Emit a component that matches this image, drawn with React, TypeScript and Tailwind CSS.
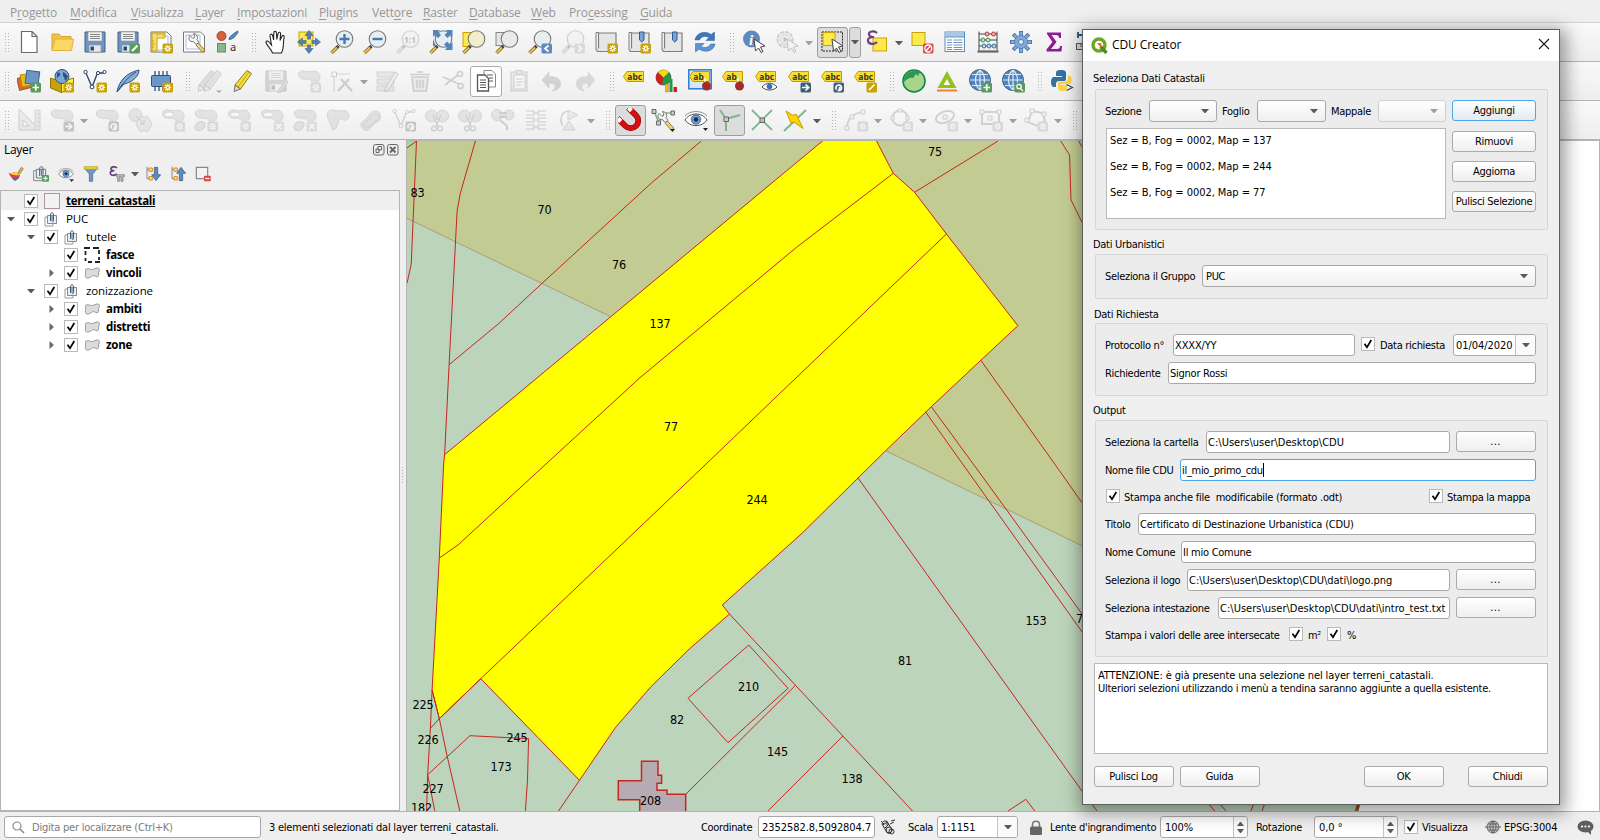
import React from "react";

type Node = React.ReactNode;

/* ---------- icon building blocks (24 x 24 grid) ---------- */

function Ico({ children, off = false, size = 24 }: { children: Node; off?: boolean; size?: number }) {
  return (
    <svg width={size} height={size} viewBox="0 0 24 24" fill="none" className={off ? "shrink-0 opacity-30 grayscale" : "shrink-0"}>
      {children}
    </svg>
  );
}

const Star = () => (
  <g>
    <rect x="13.5" y="13.5" width="10.5" height="10" rx="1.5" fill="#c9a206" />
    <path d="M18.75 15v7M15.3 18.5h6.9M16.3 16l4.9 5M21.2 16l-4.9 5" stroke="#fff" strokeWidth="1.1" />
    <circle cx="18.75" cy="18.5" r="1" fill="#c9a206" />
  </g>
);
const Badge = ({ c, d }: { c: string; d: string }) => (
  <g>
    <rect x="13.5" y="13.5" width="10.5" height="10" rx="1.5" fill={c} />
    <path d={d} stroke="#fff" strokeWidth="1.7" />
  </g>
);
const Plus = () => <Badge c="#5b9a5f" d="M18.75 15.3v6.4M15.5 18.5h6.5" />;
const ArrowB = () => <Badge c="#415f78" d="M15 18.5h6M18.5 15.5l3.2 3-3.2 3" />;
const RotB = () => <Badge c="#415f78" d="M16.5 20.5a2.8 2.8 0 1 1 3 1M19.5 18v3.5h-2" />;
const DelB = () => <Badge c="#d9a0a0" d="M16.3 16l5 5M21.3 16l-5 5" />;

const Blob = () => (
  <path d="M1.500 6C1 2.500 5 1.200 8 2.200s6 .3 9 0 6 2 6 6-3.500 6-6.500 5-3-3.200-6-3S2 10.500 1.500 6z" fill="#b4b9b4" stroke="#8a8a8a" strokeWidth="1" />
);
const Lens = ({ fill = "#e6eef2" }: { fill?: string }) => (
  <g>
    <path d="M1.500 23l7-7" stroke="#444" strokeWidth="3.200" />
    <path d="M1.500 23l5.500-5.500" stroke="#f4c430" strokeWidth="2.200" />
    <circle cx="14.500" cy="9" r="8.300" fill={fill} stroke="#777" strokeWidth="1.100" />
  </g>
);
const Tag = ({ t = "abc" }: { t?: string }) => (
  <g>
    <path d="M1.500 7.500L5 2.500h16.500v10H5z" fill="#f7de33" stroke="#bf9a07" />
    <text x="5.300" y="10.500" fontSize="8.500" fontWeight="700" fill="#3b3618" fontFamily="Noto Sans, sans-serif">{t}</text>
  </g>
);
const Floppy = () => (
  <g>
    <path d="M2 2h20v20H2z" fill="#6b97c8" stroke="#42617f" />
    <path d="M5 2h14v9H5z" fill="#f4f4f4" stroke="#8d8d8d" strokeWidth=".6" />
    <path d="M7 4.500h10M7 6.500h10M7 8.500h10" stroke="#777" strokeWidth=".9" />
    <path d="M6 15h12v7H6z" fill="#e8e8e8" stroke="#8d8d8d" strokeWidth=".6" />
    <path d="M7.500 16.500h3.500v4H7.500z" fill="#2d4a6e" />
  </g>
);
const Bookmark = () => (
  <g>
    <path d="M4.500 3h17.500v18.500H3.500a2 2 0 0 1 0-3.500h1z" fill="#e6e6e6" stroke="#7d7d7d" strokeWidth="1.200" />
    <path d="M2 20V2.500h2.500v15.500" stroke="#7d7d7d" fill="#eee" />
  </g>
);
const Ribbon = () => <path d="M12.500 2h4.500v8l-2.250 2-2.250-2z" fill="#7ba3d0" stroke="#2f5b93" />;
const Globe = () => (
  <g>
    <circle cx="12" cy="11" r="10.500" fill="#4d86c6" stroke="#4f5d70" />
    <path d="M2 11h20M12 1v20M4 5.500h16M4 16.500h16M12 1c-6 5-6 15 0 20M12 1c6 5 6 15 0 20" stroke="#dfe9f3" strokeWidth="1.200" />
  </g>
);
const CursorArrow = () => <path d="M12 9l11 7-4.500 1 2.500 4.500-2 1-2.500-4.500-3 3z" fill="#fff" stroke="#444" />;
const Pencil = ({ c = "#f5dd3c" }: { c?: string }) => (
  <g>
    <path d="M4 16L16 1.500l4.500 3L9.500 20z" fill={c} stroke="#8a7a20" />
    <path d="M4 16l-.8 6.500L9.500 20z" fill="#e9d6b0" stroke="#555" strokeWidth=".8" />
    <path d="M7 18L18 3" stroke="#b09a1c" strokeWidth=".8" />
  </g>
);
const Scissors = ({ y = 0 }: { y?: number }) => (
  <g transform={`translate(0 ${y})`}>
    <path d="M8 5l5 11M16 5l-5 11" stroke="#777" strokeWidth="1.300" />
    <circle cx="9" cy="18.500" r="2.300" stroke="#777" strokeWidth="1.300" />
    <circle cx="15" cy="18.500" r="2.300" stroke="#777" strokeWidth="1.300" />
  </g>
);
const Eye = () => (
  <g>
    <path d="M1 12c5-8 17-8 22 0-5 7.500-17 7.500-22 0z" fill="#fff" stroke="#555" />
    <path d="M1 8C6 2 18 2 23 8" stroke="#888" strokeWidth=".9" />
    <circle cx="12" cy="11.500" r="4.800" fill="#6d9bd0" stroke="#395d8a" strokeWidth=".8" />
    <circle cx="12" cy="11.500" r="2.200" fill="#1f2e40" />
  </g>
);
const Vert = ({ c = "#2f4562" }: { c?: string }) => (
  <g>
    <path d="M2.500 3l6.500 15 5.500-14h7" stroke={c} strokeWidth="1.300" />
    <g fill="#fff" stroke={c}>
      <circle cx="2.500" cy="3" r="1.700" />
      <circle cx="9" cy="18" r="1.900" />
      <circle cx="15" cy="4" r="1.600" />
      <circle cx="21.500" cy="3" r="1.600" />
    </g>
  </g>
);
const Wrench = () => (
  <g>
    <path d="M15 14l7 7.500" stroke="#8d7a35" strokeWidth="4" />
    <path d="M15 14l6.500 7" stroke="#ecd583" strokeWidth="2.500" />
    <path d="M8 5.500l3 3 2-1.500-1.500-3.500c4 .5 5 4 3.500 6l2 3-3 2-2.500-3c-4 1-6-3-3.500-6z" fill="#f4f4f4" stroke="#666" strokeWidth=".9" />
  </g>
);

const icons: Record<string, Node> = {
  newdoc: <path d="M4.500 1.500h10.500l5 5v16H4.500zM15 1.500v5h5" fill="#fff" stroke="#6b6b6b" strokeWidth="1.200" />,
  open: (
    <g>
      <path d="M2 20V4h7l2 2.500h10v3" fill="#f1c244" stroke="#d9a52c" />
      <path d="M2 20.500L5 9h18.500l-2 11.500z" fill="#fbd765" stroke="#e2b13a" />
    </g>
  ),
  save: <Floppy />,
  saveas: <g><Floppy /><rect x="13.500" y="13.500" width="10.500" height="10" rx="1.500" fill="#5b9a5f" /><path d="M16 21l5.500-5.500" stroke="#fff" strokeWidth="2" /></g>,
  layout: (
    <g>
      <path d="M2 2h16l4 4v16H2z" fill="#fff" stroke="#777" />
      <path d="M6 6h13v14H6z" stroke="#a9b9e8" />
      <path d="M3 3h13v5H8v13H3z" fill="#f4dd73" stroke="#c9a206" />
      <path d="M8 3v3M11 3v2M14 3v3M3 11h2M3 14h3M3 17h2" stroke="#c9a206" />
      <Star />
    </g>
  ),
  layoutmgr: <g><path d="M1.500 2h17l4 4v16h-21z" fill="#fff" stroke="#777" /><path d="M4 5h14v14H4z" stroke="#a9b9e8" /><Wrench /></g>,
  style: (
    <g>
      <circle cx="6.500" cy="6" r="4.500" fill="#d4623a" stroke="#a84826" />
      <path d="M14 9.500C14 6 20 3 22.500 1l.5 1c-1.500 3-4 7-9 7.500z" fill="#5d8bbd" stroke="#3a6391" />
      <rect x="2.500" y="13.500" width="8" height="8.500" fill="#8ab68c" stroke="#5f9062" />
      <text x="15" y="21" fontSize="11" fill="#333" fontFamily="Noto Sans, sans-serif">a</text>
    </g>
  ),
  hand: (
    <path d="M8.500 23c-1-4-5.500-7-6.500-10.500-.3-1.800 1.800-2 3-.5L7.500 15 6 6c-.3-2.200 2-2.500 2.600-.5l1 4.500L9.800 3c0-2.200 2.600-2.200 2.700 0l.3 6.500 1.300-6c.5-2 2.700-1.500 2.500.5l-.6 6.500 1.800-4c.8-1.800 2.700-1 2.300.8C18.800 13 20.500 17 17.500 23z"
      fill="#fff" stroke="#222" strokeWidth="1.100" />
  ),
  pansel: (
    <g>
      <rect x="2" y="2" width="14" height="14" fill="#fce94f" stroke="#c9a206" />
      <path d="M12 .5l4 5h-2.500v5h5V8l5 4-5 4v-2.500h-5v5H16l-4 5-4-5h2.500v-5h-5V16l-5-4 5-4v2.500h5v-5H8z" fill="#4f80b8" stroke="#34507a" strokeWidth=".5" />
      <rect x="9.500" y="9.500" width="5" height="5" fill="#fce94f" />
    </g>
  ),
  zoomin: <g><Lens /><path d="M14.500 4v10M9.500 9h10" stroke="#4478b5" strokeWidth="2.400" /></g>,
  zoomout: <g><Lens /><path d="M9.500 9h10" stroke="#4478b5" strokeWidth="2.400" /></g>,
  zoom11: <g><Lens /><text x="8" y="12.500" fontSize="8.500" fontWeight="700" fill="#333" fontFamily="Noto Sans, sans-serif">1:1</text></g>,
  zoomfull: (
    <g>
      <Lens />
      <path d="M4 0h7L9 2l3 3-3 3-3-3-2 2zM17 0h6.500v7l-2-2-3 3-3-3 3-3zM23.500 12v8H16l2-2.500-3-3 3-3 3 3zM4 9v7h3z" fill="#5284bd" />
    </g>
  ),
  zoomsel: <g><rect x="1" y="2.500" width="11" height="14" fill="#fce94f" stroke="#c9a206" /><Lens fill="#f2eecb" /></g>,
  zoomlayer: <g><rect x="1" y="2.500" width="11" height="13" fill="#e5e5e5" stroke="#888" /><Lens fill="#e9eae9" /></g>,
  zoomlast: <g><Lens /><Badge c="#5d8bbd" d="M20.500 15.500l-3.500 3 3.500 3" /></g>,
  zoomnext: <g><Lens /><Badge c="#8aa" d="M17 15.500l3.500 3-3.500 3" /></g>,
  mapnew: <g><Bookmark /><Star /></g>,
  bmnew: <g><Bookmark /><Ribbon /><Star /></g>,
  bmshow: <g><Bookmark /><Ribbon /></g>,
  refresh: (
    <g fill="#3f77bb" stroke="#2b5c99" strokeWidth=".5">
      <path d="M2 10C3 3 12 0 18 4.500L21.500 2v8.500H13l3-3c-4-2-8-1-9.500 2.500z" />
      <path d="M22 14c-1 7-10 9.500-16 5L2.500 22v-8.500H11l-3 3c4 2 8 1 9.500-2.500z" fill="#5c93d3" />
    </g>
  ),
  info: (
    <g>
      <circle cx="9.500" cy="9" r="8.500" fill="#5d8bbd" />
      <text x="7" y="14.500" fontSize="15" fontStyle="italic" fontWeight="700" fill="#fff" fontFamily="Liberation Serif, serif">i</text>
      <CursorArrow />
    </g>
  ),
  action: (
    <g>
      <circle cx="10" cy="9.500" r="7.500" stroke="#777" strokeWidth="2" strokeDasharray="4 1" />
      <circle cx="10" cy="9.500" r="5" fill="#ddd" stroke="#777" />
      <path d="M8.500 6.500l4.500 3-4.500 3z" fill="#555" />
      <CursorArrow />
    </g>
  ),
  select: (
    <g>
      <rect x="2" y="2" width="20.500" height="19" stroke="#222" strokeDasharray="2 1" />
      <rect x="3" y="2.500" width="12" height="13" fill="#fce94f" stroke="#c9a206" />
      <CursorArrow />
    </g>
  ),
  epsel: (
    <g>
      <rect x="8" y="8" width="13.500" height="13" fill="#fce94f" stroke="#c9a206" />
      <path d="M12 3C9 0 3.500 1.500 4 4.500 4.200 7 7 7 9 7 6 7 3 7.500 3 10.500c0 4 6 4.500 9 1.500" stroke="#6b3f7d" strokeWidth="2.200" />
    </g>
  ),
  desel: (
    <g>
      <rect x="2" y="2.500" width="13" height="13" fill="#fce94f" stroke="#c9a206" />
      <rect x="13" y="13.500" width="10.500" height="10" rx="1.500" fill="#da4d4d" />
      <circle cx="18.250" cy="18.500" r="3.500" stroke="#fff" strokeWidth="1.300" />
      <path d="M16 21l4.500-5" stroke="#fff" strokeWidth="1.300" />
    </g>
  ),
  table: (
    <g>
      <rect x="2" y="2" width="19.500" height="19.500" fill="#fff" stroke="#5d8bbd" />
      <path d="M2.500 2.500h18.500v4.500H2.500z" fill="#a9c8e4" />
      <path d="M4 10h5M10.500 10h9M4 12.500h5M10.500 12.500h9M4 15h5M10.500 15h9M4 17.500h5M10.500 17.500h9M4 19.500h5M10.500 19.500h9M2 7h19" stroke="#6a93c0" />
    </g>
  ),
  abacus: (
    <g>
      <path d="M3 1.500v19M21 1.500v19M3 4h18M3 10h18M3 16h18" stroke="#444" />
      <path d="M1.500 21.500h21" stroke="#666" strokeWidth="2.200" />
      <g strokeWidth="1">
        <g fill="#f0b0b0" stroke="#b33"><circle cx="11" cy="4" r="2" /><circle cx="17.500" cy="4" r="2" /></g>
        <g fill="#c5e6c5" stroke="#3a8f3f"><circle cx="7" cy="10" r="2" /><circle cx="12" cy="10" r="2" /></g>
        <g fill="#b9d2ee" stroke="#3d6ea5"><circle cx="8" cy="16" r="2" /><circle cx="13" cy="16" r="2" /><circle cx="18" cy="16" r="2" /></g>
      </g>
    </g>
  ),
  gear: (
    <g>
      <path d="M12 1v22M1 12h22M4.200 4.200l15.600 15.600M19.800 4.200L4.200 19.800" stroke="#4a7ab5" strokeWidth="4" />
      <path d="M12 2v20M2 12h20M5 5l14 14M19 5L5 19" stroke="#84a9d6" strokeWidth="2.400" />
      <circle cx="12" cy="12" r="6.500" fill="#84a9d6" stroke="#4a7ab5" strokeWidth=".8" />
      <circle cx="12" cy="12" r="2.500" fill="#f3f3f3" stroke="#4a7ab5" />
    </g>
  ),
  sigma: <path d="M5 2.500h14V8h-2c0-2-1-3-3-3H9.500l5 7-5.500 7h6c2 0 3-1 3-3h2l-.5 5.500H4.500v-2l6-7.500L5 4z" fill="#8e1a94" />,
  measure: <g><path d="M3 2v6M3 5h19" stroke="#34507a" strokeWidth="1.800" /><path d="M1.500 13.500h24v6h-24zM6 13v4M10 13v4" fill="#ddd" stroke="#555" /></g>,
  dsm: (
    <g>
      <rect x="1" y="8" width="12" height="12" fill="#d96a2f" stroke="#a94b1a" transform="rotate(-14 7 14)" />
      <rect x="4" y="5" width="12" height="12" fill="#e8b91b" stroke="#b38a06" transform="rotate(-8 10 11)" />
      <rect x="9" y="2" width="13" height="13" fill="#6b97c8" stroke="#42617f" transform="rotate(8 15 8)" />
      <Plus />
    </g>
  ),
  gpkg: (
    <g>
      <path d="M.5 9l11 4v10.500L.5 19z" fill="#c9a206" stroke="#8f7305" />
      <path d="M11.500 13l12-4v10l-12 4.500z" fill="#fff04f" stroke="#8f7305" />
      <circle cx="12" cy="7.500" r="7" fill="#7da7d4" stroke="#34507a" />
      <path d="M7 4c2-1 4 0 3 2s-3 2-3 4M13 3c3 1 3 3 5 4l-2 5c-2-1-1-4-3-5z" fill="#34507a" />
      <Star />
    </g>
  ),
  shp: <g><Vert /><Star /></g>,
  spatialite: (
    <g>
      <path d="M1 23C3 12 10 4 23 1c0 6-6 12-15 14z" fill="#85aedb" stroke="#34507a" />
      <path d="M1 23C6 15 12 8 20 3" stroke="#34507a" />
      <Star />
    </g>
  ),
  memory: (
    <g>
      <path d="M6 2v20M10 2v20M14 2v20M18 2v20" stroke="#34507a" strokeWidth="1.300" />
      <rect x="2.500" y="6.500" width="19" height="11" rx="1" fill="#6b97c8" stroke="#34507a" />
      <Star />
    </g>
  ),
  pencils: <g><g transform="translate(-3 0)"><Pencil c="#b9a9a9" /></g><g transform="translate(3 0)"><Pencil c="#c9b9b9" /></g><path d="M18 21.500h6l-3 2.500z" fill="#000" /></g>,
  pencil: <Pencil />,
  saveedit: <g><Floppy /><path d="M14 22l8-11 2 2-7 10-3 1z" fill="#d9a0a0" stroke="#777" /></g>,
  addpoly: <g><Blob /><Star /></g>,
  vertex: <g><path d="M4 7v16M6 5h14" stroke="#777" /><rect x="2" y="3" width="4.500" height="4.500" fill="#fff" stroke="#777" /><path d="M8 22L19 10M11 10l11 12" stroke="#777" strokeWidth="2.400" /></g>,
  multiedit: <g><path d="M2 3h17v5H2zM2 10h17v5H2zM2 17h17v5H2z" fill="#cccba5" stroke="#888" /><path d="M10 20L20 3l3 2-9.500 16-3.500 2z" fill="#ddd" stroke="#666" /></g>,
  trash: <g><path d="M4 8h16l-1.500 14h-13z" fill="#e6cfcf" stroke="#9a6a6a" strokeWidth="1.500" /><path d="M2 5.500h20M9 3h6M9 11v8M12 11v8M15 11v8" stroke="#9a6a6a" strokeWidth="1.600" /></g>,
  cut: <g><path d="M2 8l16 7M4 16L17 6" stroke="#777" strokeWidth="1.600" /><circle cx="19" cy="5" r="2.500" stroke="#777" strokeWidth="1.500" /><circle cx="19.500" cy="17" r="2.500" stroke="#777" strokeWidth="1.500" /></g>,
  copy: (
    <g stroke="#555" fill="#fff">
      <path d="M10 1.500h8l3.500 3.500v13H10z" stroke="#888" />
      <path d="M3.500 6h7.500l3.500 3.500v12.500h-11z" strokeWidth="1.300" />
      <path d="M6 11h6M6 13.500h6M6 16h6M6 18.500h6M13 6h6M15 9h4M15 12h4" />
    </g>
  ),
  paste: <g><rect x="4" y="3" width="16" height="19" fill="#d3d1b4" stroke="#777" /><rect x="7" y="6" width="11" height="14" fill="#fff" stroke="#777" /><path d="M9 1.500h6V5H9zM9 10h7M9 13h7M9 16h5" fill="#ccc" stroke="#777" /></g>,
  undo: <path d="M9 3v5c7-1 12 2 11.500 7.500-.5 4-4 6-8 6.500 4-3 4-8-3.500-8v5L2 11z" fill="#a98070" stroke="#9a6a6a" strokeWidth=".7" />,
  redo: <path d="M15 3v5C8 7 3 10 3.500 15.500c.5 4 4 6 8 6.500-4-3-4-8 3.500-8v5l7-8z" fill="#8fa08f" stroke="#7a8a7a" strokeWidth=".7" />,
  abc: <Tag />,
  diagram: (
    <g>
      <circle cx="8.500" cy="8.500" r="7.500" fill="#1d9c45" stroke="#333" strokeWidth=".6" />
      <path d="M8.500 8.500L3 3.500a7.500 7.500 0 0 1 11-.5z" fill="#f8d515" />
      <path d="M8.500 8.500L3 3.500a7.500 7.500 0 0 0 4 12.500z" fill="#d11f1f" />
      <path d="M10.500 15h3v8h-3z" fill="#f8b515" stroke="#a77" strokeWidth=".5" />
      <path d="M14.500 10h3v13h-3z" fill="#1d9c45" />
      <path d="M18.500 18h3.500v5h-3.500z" fill="#d11f1f" />
    </g>
  ),
  abpin: (
    <g>
      <rect x=".8" y=".8" width="22.400" height="19" fill="#d9e8f8" stroke="#1e74d2" strokeWidth="1.400" />
      <Tag t="ab" /><path d="M17 9v8" stroke="#eee" strokeWidth="2" /><circle cx="18.500" cy="17" r="4.500" fill="#a52a2a" />
    </g>
  ),
  abpin2: <g><Tag t="ab" /><path d="M17 9v8" stroke="#eee" strokeWidth="2" /><circle cx="18.500" cy="17" r="4.500" fill="#a52a2a" /></g>,
  abceye: <g><Tag /><path d="M8 18c4-5 11-5 15 0-4 4-11 4-15 0z" fill="#fff" stroke="#444" /><circle cx="15.500" cy="17.500" r="2.800" fill="#3f6ea8" /></g>,
  abcmove: <g><Tag /><ArrowB /></g>,
  abcrot: <g><Tag /><RotB /></g>,
  abcedit: <g><Tag /><Badge c="#c9a206" d="M16 21l5.500-5.500" /></g>,
  ball: <g><circle cx="12" cy="12" r="11" fill="#a9d48d" stroke="#12874a" strokeWidth="1.600" /><path d="M2 10C4 3 12 0 18 3l-2 4-2-2-3 4c-3-1-6 1-9 4z" fill="#2b9a50" /></g>,
  tri: <g><path d="M12 2L2.500 19h19z" fill="#97bf1f" /><path d="M12 10l-3.500 6h6.500z" fill="#fff" /><path d="M2 21.500h20" stroke="#f0832a" strokeWidth="2" /></g>,
  globeadd: <g><Globe /><Plus /></g>,
  globefind: <g><Globe /><rect x="13.500" y="13.500" width="10.500" height="10" rx="1.500" fill="#5b9a5f" /><circle cx="18" cy="17.500" r="2.200" stroke="#fff" strokeWidth="1.300" /><path d="M19.500 19.500l2.500 2.500" stroke="#fff" strokeWidth="1.300" /></g>,
  python: (
    <g>
      <path d="M11 1c-4 0-5 1-5 3v3h6v1H4c-2 0-3 2-3 5s1 5 3 5h2v-3c0-2 1-3 3-3h5c2 0 2-1 2-3V4c0-2-1-3-5-3z" fill="#3470a2" />
      <path d="M12 22c4 0 5-1 5-3v-3h-6v-1h8c2 0 3-2 2.500-5S20 6 18 6.500v3c0 2-1 3-3 3h-5c-2 0-2 1-2 3V19c0 2 1 3 4 3z" fill="#fdd144" />
      <path d="M16.500 15.500l6 3-6 3" stroke="#444" strokeWidth="1.200" />
    </g>
  ),
  cad: <g><path d="M2 1v21h21z" fill="#e0cfcb" stroke="#777" /><path d="M6 12v6h6z" fill="#fff" stroke="#777" /><path d="M18 2h5v20h-5zM20 6h3M20 10h3M20 14h3M20 18h3" fill="#cccba5" stroke="#888" /></g>,
  bmove: <g><Blob /><ArrowB /></g>,
  brot: <g><Blob /><RotB /></g>,
  bsimp: <g><circle cx="7.500" cy="7" r="6.500" fill="#bbb" stroke="#888" /><path d="M12 9h8l4 7-4 7h-8l-4-7z" fill="#ccc" stroke="#888" /><path d="M8 8l8 8M16 12v4h-4" stroke="#666" /></g>,
  bring: <g><Blob /><ellipse cx="8" cy="6.500" rx="4.500" ry="2.500" fill="#fff" stroke="#888" /><Star /></g>,
  bpart: <g><Blob /><ellipse cx="6" cy="18" rx="5.500" ry="4" fill="#bbb" stroke="#888" transform="rotate(-35 6 18)" /><Star /></g>,
  bdel: <g><Blob /><ellipse cx="8" cy="6.500" rx="4.500" ry="2.500" fill="#fff" stroke="#888" /><DelB /></g>,
  bpdel: <g><Blob /><ellipse cx="6" cy="18" rx="5.500" ry="4" fill="#bbb" stroke="#888" transform="rotate(-35 6 18)" /><DelB /></g>,
  reshape: <path d="M1.500 5.500C2 2 6 1.500 9 2.500s6 0 9 0 5 2.500 5 5.500-3 5-5.500 4-3.500-1.500-4.500 0-1.500 9-5 9.500-2.500-4-4-6.500S1 9 1.500 5.500z" fill="#b4b9b4" stroke="#8a8a8a" />,
  offset: <g><path d="M4 21c-5-5 0-8 3-10s4-9 10-8 6 9 1 11-8 12-14 7z" fill="#b4b9b4" stroke="#8a8a8a" /><path d="M6 19c-3-3 0-5 3-7s4-7 8-6 4 5 0 7-7 9-11 6z" stroke="#777" /></g>,
  revert: <g><Vert c="#777" /><RotB /></g>,
  split: <g><circle cx="6.500" cy="8" r="6" fill="#bbb" stroke="#888" /><circle cx="17.500" cy="8" r="6" fill="#bbb" stroke="#888" /><Scissors y={2} /></g>,
  merge: <g><circle cx="6" cy="7" r="5.500" fill="#bbb" stroke="#888" /><circle cx="18" cy="7" r="5" fill="#bbb" stroke="#888" /><path d="M8 5h8M8 9h8M9 12l7 6v4" stroke="#777" strokeWidth="2" /></g>,
  mergeattr: <g stroke="#777" strokeWidth="1.200"><path d="M2 3h8v4H2M22 3h-8v4h8M2 10h8v4H2M22 10h-8v4h8M2 17h8v4H2M22 17h-8v4h8M9 5h6M9 12h6M9 19h6" /></g>,
  rotsym: <g><path d="M12 3c-8 0-10 10-6 15" stroke="#777" strokeWidth="1.400" /><path d="M11 2l10 5-10 5zM12 13l6 9H6z" fill="#ccc" stroke="#888" /></g>,
  magnet: (
    <g transform="rotate(-45 12 12)">
      <path d="M4.500 2v11a7.500 7.500 0 0 0 15 0V2" stroke="#7c0c0c" strokeWidth="5.800" />
      <path d="M4.500 2.500V13a7.500 7.500 0 0 0 15 0V2.500" stroke="#d80d0d" strokeWidth="4.600" />
      <path d="M4.500 2.500v4M19.500 2.500v4" stroke="#fff" strokeWidth="4.400" />
    </g>
  ),
  snapcfg: <g><path d="M3 3l5 12L14 5h8" stroke="#7db987" strokeWidth="1.600" /><g fill="#ccc" stroke="#666"><path d="M1 1.500h4v4H1zM5.500 13h4v4h-4zM20 3h3.500v4H20z" /></g><Wrench /><path d="M19 21h5l-2.500 3z" fill="#222" /></g>,
  eye: <g><Eye /><path d="M19 20h5l-2.500 3z" fill="#222" /></g>,
  topo: <g><path d="M9 11L3 2M9 11l14-4M9 11v12" stroke="#7db987" strokeWidth="2" /><path d="M7 9h4.500v4.500H7z" fill="#ccc" stroke="#666" /></g>,
  isect: <g><path d="M2 2l20 20M22 2L2 22" stroke="#7db987" strokeWidth="1.800" /><path d="M10 10h4.500v4.500H10z" fill="#bbb" stroke="#666" /></g>,
  trace: <g><path d="M1 23L23 2" stroke="#7db987" strokeWidth="2" /><path d="M3 3l7 4.500 3-1.500 3 6 4 8.500-9-6.500-3 1z" fill="#ffd500" stroke="#c99b00" /></g>,
  curve: <g><path d="M3 20C3 11 8 6 18 4" stroke="#777" strokeWidth="1.500" /><g fill="#eee" stroke="#777"><path d="M1 18h4v4H1zM6 7h4v4H6zM17 2h4v4h-4z" /></g><Star /></g>,
  circle: <g><circle cx="11" cy="10" r="7.500" stroke="#777" strokeWidth="1.800" /><g fill="#eee" stroke="#777"><path d="M9 1h4v3H9zM2 8h3v4H2zM17 8h3v4h-3z" /></g><Star /></g>,
  ellipse: <g><ellipse cx="11" cy="9" rx="9.500" ry="5.500" stroke="#777" strokeWidth="1.800" transform="rotate(-20 11 9)" /><path d="M9 7h4v4H9z" fill="#eee" stroke="#777" /><Star /></g>,
  rect: <g><rect x="3" y="4" width="17" height="12" stroke="#777" strokeWidth="1.800" /><g fill="#eee" stroke="#777"><path d="M1 2h4v4H1zM18 2h4v4h-4zM9 8h4v4H9z" /></g><Star /></g>,
  poly: <g><path d="M8 3l11 2 2 8-7 5-10-4z" stroke="#777" strokeWidth="1.800" /><g fill="#eee" stroke="#777"><path d="M6 1h4v4H6zM18 4h4v4h-4zM1 10h4v4H1z" /></g><Star /></g>,
};

/* ---------- toolbars ---------- */

/* "|" handle, "v" menu arrow, "-x" disabled, "+x" checked, "*x" hovered frame */
const rows: string[][] = [
  "newdoc open save saveas layout layoutmgr style | hand pansel zoomin zoomout -zoom11 zoomfull zoomsel zoomlayer zoomlast -zoomnext mapnew bmnew bmshow refresh | info -action -v +select V epsel v desel table abacus gear sigma measure".split(" "),
  "dsm gpkg shp spatialite memory | -pencils pencil -saveedit -addpoly -vertex -v -multiedit -trash -cut *copy -paste -undo -redo | abc diagram abpin abpin2 abceye abcmove abcrot abcedit | ball tri globeadd globefind | python".split(" "),
  "-cad -bmove -v -brot -bsimp -bring -bpart -bring -bdel -bpdel -reshape -offset -revert -split -split -merge -mergeattr -rotsym -v | +magnet snapcfg eye +topo isect trace v | -curve -v -circle -v -ellipse -v -rect -v -poly -v |".split(" "),
];

const Caret = ({ off = false, w = 8 }: { off?: boolean; w?: number }) => (
  <svg width={w} height="4" viewBox="0 0 8 4" className="shrink-0">
    <path d="M0 0h8L4.500 4h-1z" fill={off ? "#a0a0a0" : "#5a5a5a"} />
  </svg>
);

function Handle({ className }: { className: string }) {
  return (
    <div className={`flex h-full shrink-0 items-center ${className}`}>
      <svg width="5" height="19" className="shrink-0">
        {Array.from({ length: 7 }, (_, i) => (
          <g key={i} fill="#b5b5b5">
            <rect x="0" y={i * 3} width="1" height="1" />
            <rect x="3" y={i * 3} width="1" height="1" />
          </g>
        ))}
      </svg>
    </div>
  );
}

function Toolbar({ items }: { items: string[] }) {
  return (
    <div className="flex h-[39px] shrink-0 items-center border-b border-[#b4b4b4] bg-linear-to-b from-[#f9f9f9] to-[#eeeeee]">
      <Handle className="w-[12.5px] pl-[5px]" />
      {items.map((raw, i) => {
        if (raw === "|") return <Handle key={i} className="w-[16px] pl-[8.500px]" />;
        if (raw === "v" || raw === "-v")
          return (
            <div key={i} className="flex h-full w-[12px] shrink-0 items-center justify-center pr-px pt-px">
              <Caret off={raw === "-v"} />
            </div>
          );
        if (raw === "V")
          return (
            <div key={i} className="flex h-[31px] w-[12px] shrink-0 items-center justify-center rounded-[3px] border border-[#9d9d9d] bg-[#dcdcdc]">
              <Caret />
            </div>
          );
        const mod = raw[0];
        const name = "-+*".includes(mod) ? raw.slice(1) : raw;
        const frame =
          mod === "+"
            ? "flex h-[31px] w-[31px] items-center justify-center rounded-[3px] border border-[#9d9d9d] bg-[#dcdcdc]"
            : mod === "*"
            ? "flex h-[31px] w-[32px] items-center justify-center rounded-[3px] border border-[#ababab] bg-white"
            : "flex h-[31px] w-[33px] items-center justify-center";
        return (
          <div key={i} className="flex w-[33px] shrink-0 justify-center">
            <div className={frame}>
              <Ico off={mod === "-"}>{icons[name]}</Ico>
            </div>
          </div>
        );
      })}
    </div>
  );
}

function MenuBar() {
  const menus: [string, number, string][] = [
    ["Progetto", 1, "w-[60px]"], ["Modifica", 0, "w-[61px]"], ["Visualizza", 0, "w-[64px]"], ["Layer", 0, "w-[42px]"],
    ["Impostazioni", 0, "w-[82px]"], ["Plugins", 0, "w-[53px]"], ["Vettore", 4, "w-[51px]"], ["Raster", 0, "w-[46px]"],
    ["Database", 0, "w-[62px]"], ["Web", 0, "w-[38px]"], ["Processing", 3, "w-[71px]"], ["Guida", 0, "w-[40px]"],
  ];
  return (
    <div className="flex h-[20px] shrink-0 items-center border-b border-[#d2d2d2] bg-[#efefef] pl-[10px] pt-px font-['Open_Sans',sans-serif] text-[12px] tracking-[-0.15px] text-[#979797]">
      {menus.map(([m, u, w]) => (
        <div key={m} className={`shrink-0 whitespace-pre leading-none ${w}`}>
          {m.slice(0, u)}
          <span className="underline underline-offset-2">{m[u]}</span>
          {m.slice(u + 1)}
        </div>
      ))}
    </div>
  );
}

/* ---------- layers panel ---------- */

function Check({ className = "" }: { className?: string }) {
  return (
    <div className={`flex h-[14px] w-[14px] shrink-0 items-center justify-center border border-[#b9b9b9] bg-white ${className}`}>
      <svg width="10" height="10" viewBox="0 0 10 10" fill="none">
        <path d="M1.500 4.800l2.500 3.400L8.300 1" stroke="#000" strokeWidth="1.700" />
      </svg>
    </div>
  );
}

const GroupIcon = () => (
  <svg width="14" height="15" viewBox="0 0 14 15" fill="none">
    <path d="M3 5H1v9h8v-2" stroke="#999" />
    <path d="M3.500 3.500h9v8h-9z" fill="#e9eef3" stroke="#888" />
    <path d="M6.500 9V3c0-3 3-3 3 0v5.500c0 1.500-1.500 1.500-1.500 0V4" stroke="#42617f" />
  </svg>
);
const PolyIcon = () => (
  <svg width="16" height="13" viewBox="0 0 16 13" fill="none">
    <path d="M1.500 2.500c2-2 5 .5 7 0s5-2.500 6.500-1-.8 3.500-.5 5.500-.5 3.500-2.500 2.500-2.500-1.500-4.500 0-5.500 2.500-6 0 .500-4 0-7z" fill="#dcdcdc" stroke="#999" />
  </svg>
);

const tree: { pad: string; open: string; icon: string; text: string; bold: boolean }[] = [
  { pad: "pl-[4px]", open: "", icon: "square", text: "terreni_catastali", bold: true },
  { pad: "pl-[4px]", open: "down", icon: "group", text: "PUC", bold: false },
  { pad: "pl-[24px]", open: "down", icon: "group", text: "tutele", bold: false },
  { pad: "pl-[44px]", open: "", icon: "dash", text: "fasce", bold: true },
  { pad: "pl-[44px]", open: "right", icon: "poly", text: "vincoli", bold: true },
  { pad: "pl-[24px]", open: "down", icon: "group", text: "zonizzazione", bold: false },
  { pad: "pl-[44px]", open: "right", icon: "poly", text: "ambiti", bold: true },
  { pad: "pl-[44px]", open: "right", icon: "poly", text: "distretti", bold: true },
  { pad: "pl-[44px]", open: "right", icon: "poly", text: "zone", bold: true },
];

function LayerPanel() {
  return (
    <div className="flex w-[400px] shrink-0 flex-col font-['Open_Sans',sans-serif] text-[12px] text-black">
      <div className="flex h-[20px] items-center pl-[4px] pr-px">
        <span className="flex-1 leading-none tracking-[-0.3px]">Layer</span>
        <svg width="26" height="12" viewBox="0 0 26 12" fill="none" stroke="#666">
          <rect x=".5" y=".5" width="10.500" height="10.500" rx="2" />
          <path d="M5 2.500h3.500V6H5zM3 5h3v3.500H3z" />
          <rect x="14.500" y=".5" width="10.500" height="10.500" rx="2" />
          <path d="M17 3l5.500 5.500M22.500 3L17 8.500" strokeWidth="1.800" />
        </svg>
      </div>
      <div className="flex h-[30px] items-center pb-[2px] pl-[8px]">
        <div className="flex w-[25px]"><Ico size={16}><path d="M14 11l6-9 3 2-6 9z" fill="#e0ac5a" stroke="#9a6b22" /><path d="M1 10c5 2 8-2 12 0l5 4c-1 4-4 7-8 8-3-3-7-6-9-12z" fill="#e5412f" /><path d="M1 10c5 2 8-2 12 0l5 4c-6 0-12 0-17-4z" fill="#ffd23c" /><path d="M6 18c4 0 7-1 11-2-1 3-4 5-7 6z" fill="#3f6ec0" /></Ico></div>
        <div className="flex w-[25px]"><Ico size={16}><path d="M5 7H1v15h13v-3" stroke="#888" strokeWidth="1.500" /><path d="M5 5h14v13H5z" fill="#e9eef3" stroke="#777" strokeWidth="1.500" /><path d="M10 15V4c0-4 5-4 5 0v9c0 3-2.500 3-2.500 0V6" stroke="#42617f" strokeWidth="1.500" /><Plus /></Ico></div>
        <div className="flex w-[25px]"><Ico size={16}><Eye /><path d="M17 20h7l-3.500 4z" fill="#333" /></Ico></div>
        <div className="flex w-[26px]"><Ico size={16}><path d="M2 3h20l-7.500 9v11h-5V12z" fill="#6b97c8" stroke="#42617f" /><path d="M2 1h20v4H2z" fill="#f0d435" stroke="#b59a10" /></Ico></div>
        <div className="flex w-[18px]"><Ico size={16}><path d="M12 3C9 0 2.500 1 3 4.500 3.200 7 6 7 8 7 5 7 2 7.500 2 10.500c0 4 6 4.500 10 1.500" stroke="#6b3f7d" strokeWidth="2.500" /><path d="M11 13h12v3h-2v7h-3v-7h-2v7h-3v-7h-2z" fill="#bbb" stroke="#777" /></Ico></div>
        <div className="flex w-[18px] items-center justify-center pr-[3px]"><Caret /></div>
        <div className="flex w-[25px]"><Ico size={16}><path d="M3 1v18M3 5h4M3 19h4" stroke="#888" strokeWidth="1.500" /><path d="M6 3h5v5H6zM6 16h5v5H6z" fill="#ffe08a" stroke="#e08a12" strokeWidth="1.500" /><path d="M14 2h5v11h4.500L16.500 22 10 13h4z" fill="#5d8bbd" stroke="#34507a" /></Ico></div>
        <div className="flex w-[25px]"><Ico size={16}><path d="M3 1v18M3 5h4M3 19h4" stroke="#888" strokeWidth="1.500" /><path d="M6 3h5v5H6zM6 16h5v5H6z" fill="#ffe08a" stroke="#e08a12" strokeWidth="1.500" /><path d="M14 22h5V11h4.500L16.500 2 10 11h4z" fill="#5d8bbd" stroke="#34507a" /></Ico></div>
        <div className="flex w-[20px]"><Ico size={16}><path d="M2 2h17v17H2z" fill="#f2f2f2" stroke="#888" strokeWidth="1.800" /><rect x="13.500" y="14.500" width="10" height="8.500" rx="1" fill="#e0443e" /><path d="M15.500 18.750h6" stroke="#fff" strokeWidth="2" /></Ico></div>
      </div>
      <div className="flex-1 border border-[#b4b4b4] bg-white">
        {tree.map((n, i) => (
          <div key={n.text} className={`flex items-center ${n.pad} ${i === 0 ? "h-[19px] bg-[#efefef]" : "h-[18px]"}`}>
            <div className="flex w-[19px] shrink-0 items-center pl-[2px]">
              {n.open === "down" && <Caret />}
              {n.open === "right" && (
                <svg width="7" height="8" viewBox="0 0 7 8"><path d="M2.500 0v8L6.500 4.500v-1z" fill="#6a6a6a" /></svg>
              )}
            </div>
            <Check />
            <div className="flex w-[28px] shrink-0 items-center pl-[6px]">
              {n.icon === "square" && <div className="h-[16px] w-[16px] border border-[#b391a0] bg-[#f4f1f2]" />}
              {n.icon === "group" && <GroupIcon />}
              {n.icon === "poly" && <PolyIcon />}
              {n.icon === "dash" && (
                <svg width="17" height="16" fill="none"><path d="M0 1h6M9 1h6M1.500 4v4M1.500 11v3M15 3v4M15 10v3M4 15h4M11 15h5" stroke="#222" strokeWidth="1.800" /></svg>
              )}
            </div>
            <span className={`whitespace-nowrap leading-none ${n.bold ? "text-[11.5px] font-bold tracking-[-0.3px]" : "text-[11.5px] tracking-[-0.1px]"} ${i === 0 ? "underline" : ""}`}>{n.text}</span>
          </div>
        ))}
      </div>
    </div>
  );
}

/* ---------- map canvas ---------- */

const parcels = [
  "444.6,454.7 449.1,364.7 457.1,211 460.3,193.3 475.4,141",
  "449.1,364.7 498.2,324 541,284.3 652.2,182.3 701.3,141",
  "416.5,141 411.2,264.3 407,283.3",
  "407,148 418,140",
  "893.3,173.3 797.3,246.7 639.3,378.3 534,475 458,545 439.3,558",
  "946.4,234 694.6,475 480.8,678.7 439.3,718.7 430.4,728.3",
  "432.1,690 430.4,728.3 427.7,774.7 426.5,811",
  "432.1,690 439.3,718.7 446.9,755 459.8,811",
  "434.8,811 427.7,774.7 470,735.7 528.6,738.7 527.5,780 525.4,811",
  "579.5,780.3 558.5,811",
  "998,141 914.5,192.3",
  "1060.7,141 1069.6,155 1071,200 1082,222.3 1090,235",
  "1078.6,141 1084,150",
  "980.8,360.3 1062.5,475 1085,507",
  "931.3,406.7 981.3,475 1085,618",
  "925.4,411.7 970.5,475 1085,636",
  "858,478 1082,791 1097,811",
  "729.5,614 795.5,685.3 842.9,736 912.5,811",
  "842.9,736 767.9,811",
  "795.5,685.3 685.7,794.3",
  "748.7,645 788,688.3 728,742.7 688,698.3 748.7,645",
  "1008,811 1025.9,799.3 1034.8,811",
  "1207,802 1214.700,811",
  "1218,802 1226,811",
  "1254,803 1251,811",
  "1265,803 1262,811",
];
const labels: [string, number, number][] = [
  ["75", 935, 155.5], ["83", 417.5, 196.5], ["70", 544.5, 214], ["76", 619, 269], ["137", 660, 328], ["77", 671, 431],
  ["244", 757, 504], ["153", 1036, 625], ["7", 1079.5, 623], ["81", 905, 665], ["210", 748.5, 691], ["82", 677, 724],
  ["225", 423, 709], ["226", 428, 744], ["245", 517, 742], ["173", 501, 771], ["227", 433, 793], ["182", 421.5, 812],
  ["145", 777.5, 756], ["138", 852, 783], ["208", 650.5, 805], ["97", 1023, 819.5],
];

function MapCanvas() {
  return (
    <div className="flex-1 overflow-hidden border border-b-0 border-[#b4b4b4] bg-white">
      <svg width="1192" height="670" viewBox="407 141 1192 670" className="block" fill="none">
        <rect x="407" y="141" width="950" height="670" fill="#bcd4bb" />
        <path d="M407 141H1357V690L1082 545.700 885.700 450.700 610.700 316.700 407 218.300z" fill="#c2cb91" />
        <path d="M407 218.300L610.700 316.700M885.700 450.700L1082 545.700 1120 564" stroke="#a99c7c" />
        <path d="M407 141h11l-11 8z" fill="#8fe0a0" />
        <path d="M1359 803l-2.500 8" stroke="#9a4a1a" strokeWidth="3.500" />
        <polygon
          points="823.7,140 876,140 893.3,173.3 914.6,192.3 946.4,234 1017.9,325.7 980.8,360.3 931.3,406.7 885.7,450.7 858,478 802,533.3 722.3,605 729.5,614 689.3,649 651,686.7 615.6,727.3 579.5,780.3 480.8,678.7 439.3,718.7 432.1,690 439.3,558 443.7,463 444.6,454.7"
          fill="#ffff00" stroke="#c5261f"
        />
        <path d="M641.500 761.300H658v14h3.600v8H657v7h10v4h18.700V815h-46v-15.300h-21.400v-19h23.200z" fill="#b7abb3" stroke="#c5261f" strokeWidth="1.500" />
        {parcels.map((p) => <polyline key={p} points={p} stroke="#c5261f" />)}
        <g className="font-['DejaVu_Sans_Condensed','DejaVu_Sans',sans-serif] text-[12.5px] tracking-[-0.1px]" fill="#000" textAnchor="middle">
          {labels.map(([t, x, y]) => <text key={t} x={x} y={y}>{t}</text>)}
        </g>
      </svg>
    </div>
  );
}

/* ---------- dialog ---------- */

const fieldBase = "flex h-[22px] items-center overflow-hidden whitespace-nowrap rounded-[3px] border bg-white";
const field = `${fieldBase} border-[#a9a9a9]`;
const buttonBase = "flex h-[21px] items-center justify-center whitespace-nowrap rounded-[3px] border bg-linear-to-b from-white";
const button = `${buttonBase} border-[#ababab] to-[#efefef]`;
const group = "ml-[1px] rounded-[2px] border border-[#d6d6d6] bg-[#ececec] pl-[10px] pr-[11px]";

function Combo({ w, off = false, text = "" }: { w: string; off?: boolean; text?: string }) {
  return (
    <div className={`flex h-[22px] items-center justify-between rounded-[3px] border bg-linear-to-b from-white to-[#efefef] pl-[3px] pr-[7px] ${off ? "border-[#cfcfcf]" : "border-[#a9a9a9]"} ${w}`}>
      <span>{text}</span>
      <Caret off={off} />
    </div>
  );
}

function Row({ label, lw, value, track = "tracking-[-0.25px]", browse = false, focus = false }: { label: string; lw: string; value: string; track?: string; browse?: boolean; focus?: boolean }) {
  return (
    <div className="flex items-center">
      <span className={`-ml-px mr-px shrink-0 whitespace-nowrap ${lw}`}>{label}</span>
      <div className={`${fieldBase} min-w-0 flex-1 pl-px ${track} ${focus ? "border-[#4ba6ee]" : "border-[#a9a9a9]"}`}>
        {value}
        {focus && <span className="h-[14px] w-px bg-black" />}
      </div>
      {browse && <div className={`${button} -mt-px ml-[6px] w-[80px] shrink-0 pr-px tracking-[0.3px]`}>...</div>}
    </div>
  );
}

function Dialog() {
  return (
    <div className="absolute left-[1082px] top-[29px] flex h-[776px] w-[478px] flex-col border border-[#5f5f5f] bg-[#efefef] shadow-[2px_4px_16px_4px_rgba(0,0,0,0.38)]">
      <div className="flex h-[31px] shrink-0 items-center bg-white pl-[8px] pr-[9px] font-['Open_Sans',sans-serif] text-[12px] tracking-[-0.1px]">
        <svg width="17" height="17" viewBox="0 0 17 17" fill="none" className="-mt-px">
          <circle cx="8" cy="8" r="6" stroke="#6ea52c" strokeWidth="3.400" />
          <path d="M9.500 9.500l6 6.500" stroke="#4f8a22" strokeWidth="3.400" />
          <path d="M6.500 6.500h3.500v3.500z" fill="#ee7913" stroke="#ee7913" />
        </svg>
        <span className="ml-[4px] flex-1 pb-px">CDU Creator</span>
        <svg width="12" height="12" fill="none" className="-mt-[3px]"><path d="M1 1l10 10M11 1L1 11" stroke="#222" strokeWidth="1.200" /></svg>
      </div>

      <div className="flex flex-1 flex-col pl-[11px] pr-[11px] font-['DejaVu_Sans_Condensed','DejaVu_Sans',sans-serif] text-[11px] leading-[13px] tracking-[-0.3px] text-black">
        <div className="-ml-px mt-[11px] h-[17px] tracking-[-0.25px]">Seleziona Dati Catastali</div>
        <div className={`${group} h-[141px] pt-[10px]`}>
          <div className="flex">
            <div className="w-[340px]">
              <div className="flex items-center">
                <span className="-ml-px mr-px w-[43px]">Sezione</span>
                <Combo w="w-[68px]" />
                <span className="w-[40px] pl-[5px]">Foglio</span>
                <Combo w="w-[69px]" />
                <span className="w-[52px] pl-[5px]">Mappale</span>
                <Combo w="w-[68px]" off />
              </div>
              <div className="mt-[6px] h-[91px] border border-[#b9b9b9] bg-white pl-[3px] pt-[5px] tracking-[-0.05px]">
                {["137", "244", "77"].map((m) => (
                  <div key={m} className="h-[26px]">Sez = B, Fog = 0002, Map = {m}</div>
                ))}
              </div>
            </div>
            <div className="ml-[6px] flex w-[84px] flex-col">
              <div className={`${buttonBase} border-[#4ba6ee] to-[#e4eaf0]`}>Aggiungi</div>
              <div className={`${button} mt-[10px]`}>Rimuovi</div>
              <div className={`${button} mt-[9px]`}>Aggiorna</div>
              <div className={`${button} mt-[9px]`}>Pulisci Selezione</div>
            </div>
          </div>
        </div>

        <div className="-ml-px mt-[8px] h-[16px]">Dati Urbanistici</div>
        <div className={`${group} h-[45px] pt-[10px]`}>
          <div className="flex items-center">
            <span className="-ml-px mr-px w-[96px] shrink-0">Seleziona il Gruppo</span>
            <Combo w="flex-1" text="PUC" />
          </div>
        </div>

        <div className="mt-[9px] h-[15px]">Dati Richiesta</div>
        <div className={`${group} flex h-[73px] flex-col gap-[6px] pt-[10px]`}>
          <div className="flex items-center">
            <span className="-ml-px mr-px w-[67px] shrink-0">Protocollo n°</span>
            <div className={`${field} w-[182px] pl-px tracking-[-0.15px]`}>XXXX/YY</div>
            <Check className="-mt-[3px] ml-[6px]" />
            <span className="flex-1 pl-[5px]">Data richiesta</span>
            <div className={`${field} w-[83px] justify-between pl-[2px] tracking-[-0.05px]`}>
              01/04/2020
              <span className="flex h-full w-[20px] items-center justify-center border-l border-[#c4c4c4] bg-[#fafafa]"><Caret /></span>
            </div>
          </div>
          <Row label="Richiedente" lw="w-[62px]" value="Signor Rossi" />
        </div>

        <div className="-ml-px mt-[8px] h-[16px]">Output</div>
        <div className={`${group} flex h-[237px] flex-col gap-[6px] pt-[10px]`}>
          <Row label="Seleziona la cartella" lw="w-[100px]" value={"C:\\Users\\user\\Desktop\\CDU"} track="tracking-[0.02px]" browse />
          <Row label="Nome file CDU" lw="w-[74px]" value="il_mio_primo_cdu" track="tracking-[-0.3px]" focus />
          <div className="flex h-[20px] items-center">
            <Check className="-mt-[3px]" />
            <span className="flex-1 whitespace-pre pl-[4px] tracking-[-0.23px]">Stampa anche file  modificabile (formato .odt)</span>
            <Check className="-mt-[3px]" />
            <span className="w-[93px] pl-[4px]">Stampa la mappa</span>
          </div>
          <Row label="Titolo" lw="w-[32px]" value="Certificato di Destinazione Urbanistica (CDU)" track="tracking-[-0.2px]" />
          <Row label="Nome Comune" lw="w-[75px]" value="Il mio Comune" />
          <Row label="Seleziona il logo" lw="w-[81px]" value={"C:\\Users\\user\\Desktop\\CDU\\dati\\logo.png"} track="tracking-[-0.02px]" browse />
          <Row label="Seleziona intestazione" lw="w-[112px]" value={"C:\\Users\\user\\Desktop\\CDU\\dati\\intro_test.txt"} track="tracking-[0.02px]" browse />
          <div className="flex h-[20px] items-center">
            <span className="-ml-px mr-px w-[183px] whitespace-nowrap">Stampa i valori delle aree intersecate</span>
            <Check className="-mt-[3px]" />
            <span className="w-[24px] pl-[5px]">m²</span>
            <Check className="-mt-[3px]" />
            <span className="pl-[6px]">%</span>
          </div>
        </div>

        <div className="mt-[6px] h-[91px] border border-[#b9b9b9] bg-white pl-[3px] pt-[5px]">
          <div className="whitespace-nowrap tracking-[-0.12px]">ATTENZIONE: è già presente una selezione nel layer terreni_catastali.</div>
          <div className="whitespace-nowrap tracking-[-0.25px]">Ulteriori selezioni utilizzando i menù a tendina saranno aggiunte a quella esistente.</div>
        </div>
        <div className="mt-[12px] flex">
          <div className={`${button} w-[80px] pr-px`}>Pulisci Log</div>
          <div className={`${button} ml-[6px] w-[80px] pr-px`}>Guida</div>
          <div className={`${button} ml-auto w-[80px] pr-px`}>OK</div>
          <div className={`${button} ml-[24px] w-[80px] pr-px`}>Chiudi</div>
        </div>
      </div>
    </div>
  );
}

/* ---------- status bar ---------- */

function Spin({ text, w }: { text: string; w: string }) {
  return (
    <div className={`${field} justify-between pl-[4px] tracking-[-0.05px] ${w}`}>
      {text}
      <span className="flex h-full w-[14px] flex-col items-center justify-center gap-[3px] border-l border-[#c4c4c4] bg-[#fafafa]">
        <svg width="7" height="4"><path d="M0 4h7L4 0H3z" fill="#5a5a5a" /></svg>
        <svg width="7" height="4"><path d="M0 0h7L4 4H3z" fill="#5a5a5a" /></svg>
      </span>
    </div>
  );
}

function StatusBar() {
  return (
    <div className="flex h-[29px] shrink-0 items-center whitespace-nowrap border-t border-[#b4b4b4] bg-[#efefef] pl-[4px] pt-[2px] font-['DejaVu_Sans_Condensed','DejaVu_Sans',sans-serif] text-[11px] leading-[13px] tracking-[-0.3px] text-black">
      <div className={`${field} w-[257px] shrink-0 tracking-[-0.22px] text-[#7b7b7b]`}>
        <svg width="13" height="13" viewBox="0 0 13 13" fill="none" className="ml-[7px] mr-[7px]" stroke="#8a8a8a" strokeWidth="1.200">
          <circle cx="5" cy="5" r="4" /><path d="M8 8l4 4" strokeWidth="1.600" />
        </svg>
        Digita per localizzare (Ctrl+K)
      </div>
      <span className="w-[433px] shrink-0 pl-[8px] tracking-[-0.23px]">3 elementi selezionati dal layer terreni_catastali.</span>
      <span className="ml-[7px] w-[57px] shrink-0">Coordinate</span>
      <div className={`${field} w-[117px] shrink-0 pl-[3px] tracking-[-0.05px]`}>2352582.8,5092804.7</div>
      <svg width="16" height="16" viewBox="0 0 16 16" fill="none" className="ml-[5px] shrink-0" stroke="#333">
        <path d="M2 5c1-4 5-4 6-1l4 7c-1 4-5 4-6 1z" fill="#ddd" /><path d="M3 6l4-3M5 9l4-4M7 2v4M1 2l3 3M11 2l4-1M10 5l4-2" /><circle cx="9" cy="11" r="3" /><circle cx="11.500" cy="12.500" r="2.500" />
      </svg>
      <span className="w-[41px] shrink-0 pl-[12px]">Scala</span>
      <div className={`${field} w-[81px] shrink-0 justify-between pl-[3px] tracking-[-0.05px]`}>
        1:1151
        <span className="flex h-full w-[20px] items-center justify-center border-l border-[#c4c4c4] bg-[#fafafa]"><Caret /></span>
      </div>
      <svg width="12" height="15" viewBox="0 0 12 15" fill="none" className="ml-[12px] shrink-0">
        <path d="M2.500 8V4.500c0-4.500 7-4.500 7 0V8" stroke="#777" strokeWidth="1.500" /><rect y="6.500" width="12" height="8.500" rx="1.500" fill="#666" />
      </svg>
      <span className="w-[118px] shrink-0 pl-[8px]">Lente d'ingrandimento</span>
      <Spin text="100%" w="w-[88px] shrink-0" />
      <span className="w-[66px] shrink-0 pl-[8px]">Rotazione</span>
      <Spin text="0,0 °" w="w-[84px] shrink-0" />
      <Check className="-mt-px ml-[6px]" />
      <span className="w-[67px] shrink-0 pl-[4px]">Visualizza</span>
      <svg width="16" height="14" viewBox="0 0 16 14" fill="none" className="shrink-0" stroke="#666">
        <circle cx="8" cy="7" r="6" fill="#ccc" /><path d="M0 7h16M8 1v12M3 4h10M3 10h10M8 1c-4 3-4 9 0 12M8 1c4 3 4 9 0 12" />
      </svg>
      <span className="w-[73px] shrink-0 pl-[3px] tracking-[-0.15px]">EPSG:3004</span>
      <svg width="17" height="15" viewBox="0 0 17 15" className="ml-[3px] shrink-0">
        <ellipse cx="8.500" cy="6.500" rx="8" ry="6" fill="#5e5e5e" /><path d="M10 11l4 4v-5z" fill="#5e5e5e" />
        <g fill="#fff"><circle cx="5" cy="6.500" r="1.100" /><circle cx="8.500" cy="6.500" r="1.100" /><circle cx="12" cy="6.500" r="1.100" /></g>
      </svg>
    </div>
  );
}

export default function App() {
  return (
    <div className="relative flex h-[840px] w-[1600px] flex-col overflow-hidden bg-[#efefef] pt-[3px]">
      <MenuBar />
      {rows.map((r, i) => <Toolbar key={i} items={r} />)}
      <div className="flex min-h-0 flex-1">
        <LayerPanel />
        <div className="flex w-[6px] shrink-0 items-center justify-center">
          <svg width="2" height="18">{[0, 3, 6, 9, 12, 15].map((y) => <rect key={y} y={y} width="1" height="1" fill="#b0b0b0" />)}</svg>
        </div>
        <MapCanvas />
      </div>
      <StatusBar />
      <Dialog />
    </div>
  );
}
